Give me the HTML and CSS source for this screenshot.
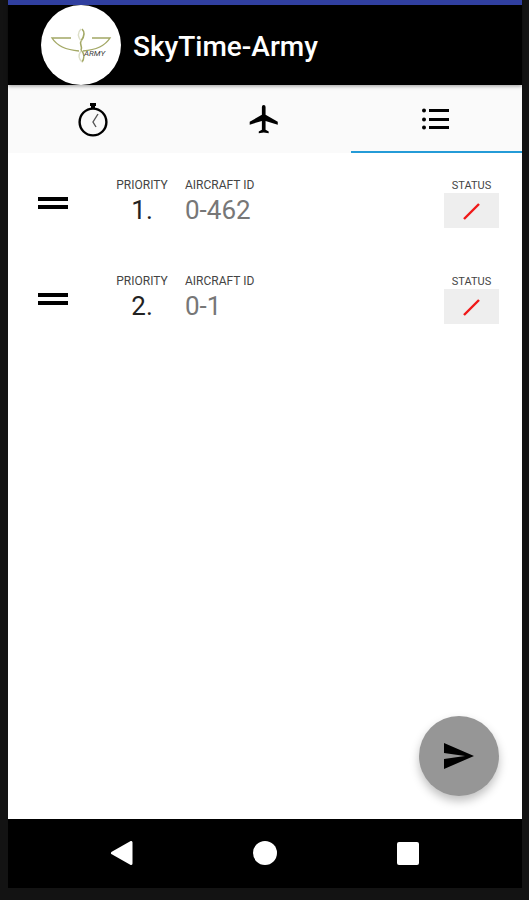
FILE: index.html
```html
<!DOCTYPE html>
<html lang="en">
<head>
    <meta charset="utf-8">
    <meta name="viewport" content="width=device-width, initial-scale=1">
    <title>SkyTime-Army</title>
    <link rel="stylesheet" href="styles.css">
</head>
<body>
<div class="screen">

    <!-- Header -->
    <header class="app-bar">
        <div class="logo">
            <svg viewBox="0 0 80 80" aria-hidden="true">
                <g fill="none" stroke="#a3a865" stroke-width="1.4">
                    <path d="M30 33H11C16 41 26 45 38 46M51 33H69C64 41 54 45 42 46"/>
                    <path d="M41 24C45 28 43 32 40 36C38 40 42 41 40 45M40 45C44 49 43 54 41 57" stroke-width="1.6"/>
                    <path d="M40 24C36 28 37 32 40 36M40 46C37 50 38 54 41 57" stroke="#dddfc8"/>
                </g>
                <text class="logo-text" x="43" y="51">ARMY</text>
            </svg>
        </div>
        <h1 class="title">SkyTime-Army</h1>
    </header>

    <!-- Tabs -->
    <nav class="tabs">
        <a href="#" class="tab" aria-label="Timer">
            <svg width="32" height="36" viewBox="0 0 32 36">
                <circle cx="15" cy="21" r="13.4" fill="none" stroke="#000" stroke-width="2.4"/>
                <path d="M12 2h6v3h-1v3h-4V5h-1z"/>
                <path d="M20 13L15 21L18 26" fill="none" stroke="#555" stroke-width="1.4"/>
            </svg>
        </a>
        <a href="#" class="tab" aria-label="Aircraft">
            <svg width="34" height="34" viewBox="0 0 24 24">
                <path d="M9.800 9V3.500a1.300 1.300 0 0 1 2.600 0V9L21 14v2l-8.600-2.600V19.500l2.200 1.300V22L11.100 21.500l-3.500.5v-1.200L9.800 19.500v-6.100L1.200 16v-2z"/>
            </svg>
        </a>
        <a href="#" class="tab active" aria-label="List">
            <svg width="28" height="24" viewBox="0 0 28 24">
                <path d="M7 2h20v3H7zM7 11h20v3H7zM7 19h20v3H7z"/>
                <circle cx="2" cy="3.500" r="2"/>
                <circle cx="2" cy="12.500" r="2"/>
                <circle cx="2" cy="20.500" r="2"/>
            </svg>
        </a>
    </nav>

    <!-- Aircraft list -->
    <main class="content">
        <ul class="list">
            <li class="row">
                <button type="button" class="handle" aria-label="Reorder"></button>
                <div class="field priority">
                    <span class="label">PRIORITY</span>
                    <span class="value">1.</span>
                </div>
                <div class="field aircraft">
                    <span class="label">AIRCRAFT ID</span>
                    <span class="value">0-462</span>
                </div>
                <div class="field status">
                    <label class="label" for="status1">STATUS</label>
                    <button type="button" class="status-btn" id="status1">
                        <svg width="18" height="18" viewBox="0 0 18 18"><path d="M1 17L16 2"/></svg>
                    </button>
                </div>
            </li>
            <li class="row">
                <button type="button" class="handle" aria-label="Reorder"></button>
                <div class="field priority">
                    <span class="label">PRIORITY</span>
                    <span class="value">2.</span>
                </div>
                <div class="field aircraft">
                    <span class="label">AIRCRAFT ID</span>
                    <span class="value">0-1</span>
                </div>
                <div class="field status">
                    <label class="label" for="status2">STATUS</label>
                    <button type="button" class="status-btn" id="status2">
                        <svg width="18" height="18" viewBox="0 0 18 18"><path d="M1 17L16 2"/></svg>
                    </button>
                </div>
            </li>
        </ul>
        <button type="button" class="fab" aria-label="Send">
            <svg width="32" height="28" viewBox="0 0 32 28">
                <path d="M1 1L31 14L1 27V17L22 14L1 11z"/>
            </svg>
        </button>
    </main>

    <!-- System navigation -->
    <footer class="nav-bar">
        <button type="button" class="nav-btn" aria-label="Back">
            <svg width="24" height="24" viewBox="0 0 24 24"><path d="M2.500 12L21 1.500V22.500z" stroke-width="3" stroke-linejoin="round"/></svg>
        </button>
        <button type="button" class="nav-btn" aria-label="Home">
            <svg width="24" height="24" viewBox="0 0 24 24"><circle cx="12" cy="12" r="12"/></svg>
        </button>
        <button type="button" class="nav-btn" aria-label="Recent apps">
            <svg width="24" height="24" viewBox="0 0 24 24"><rect x="1" y="1" width="22" height="23" rx="2"/></svg>
        </button>
    </footer>

</div>
</body>
</html>
```
FILE: styles.css
```css
* {
    box-sizing: border-box;
}

body {
    margin: 0;
    background-color: #131313;
    font-family: Roboto, "Liberation Sans", sans-serif;
    color: #222;
}

button {
    border: none;
    padding: 0;
    background: none;
    font-family: inherit;
    cursor: pointer;
}

/* Phone screen inside the dark frame */
.screen {
    display: flex;
    flex-direction: column;
    min-height: 100vh;
    border: solid #131313;
    border-width: 0 7px 12px 8px;
    background-color: #fff;
}

/* Header */
.app-bar {
    display: flex;
    align-items: center;
    gap: 12px;
    height: 85px;
    padding-left: 33px;
    border-top: 5px solid #303f9f;
    background-color: #000;
    box-shadow: 0 1px 4px rgba(0, 0, 0, 0.4);
    z-index: 1;
}

.logo {
    width: 80px;
    height: 80px;
    border-radius: 50%;
    background-color: #fff;
}

.logo svg {
    display: block;
}

.logo-text {
    font-size: 8px;
    font-style: italic;
    fill: #444;
}

.title {
    margin: 0;
    padding-top: 2px;
    font-size: 28px;
    font-weight: 500;
    color: #fff;
}

/* Tabs */
.tabs {
    display: flex;
    height: 68px;
    background-color: #fafafa;
}

.tab {
    display: flex;
    flex: 1;
    align-items: center;
    justify-content: center;
    border: solid transparent;
    border-width: 2px 0;
}

.tab.active {
    border-bottom-color: #249bd7;
}

/* Aircraft list */
.content {
    display: flex;
    flex: 1;
    flex-direction: column;
    justify-content: space-between;
}

.list {
    list-style: none;
    margin: 0;
    padding: 0;
}

.row {
    display: flex;
    align-items: center;
    padding: 25px 23px 21px 30px;
}

.handle {
    width: 30px;
    height: 12px;
    border: solid #000;
    border-width: 4px 0;
}

.field {
    display: flex;
    flex-direction: column;
}

.label {
    font-size: 12px;
    line-height: 15px;
    white-space: nowrap;
    color: #444;
}

.value {
    font-size: 26px;
    line-height: 35px;
}

.priority {
    align-items: center;
    width: 52px;
    margin-left: 48px;
}

.aircraft {
    flex: 1;
    margin-left: 17px;
}

.aircraft .value {
    color: #777;
}

.status {
    align-items: center;
}

.status .label {
    font-size: 11px;
}

.status-btn {
    display: flex;
    align-items: center;
    justify-content: center;
    width: 55px;
    height: 35px;
    background-color: #eee;
}

.status-btn path {
    fill: none;
    stroke: #f01818;
    stroke-width: 2.4;
}

/* Send button */
.fab {
    display: flex;
    align-items: center;
    justify-content: center;
    align-self: flex-end;
    width: 80px;
    height: 80px;
    margin: 0 23px 23px 0;
    border-radius: 50%;
    background-color: #969696;
    box-shadow: 0 5px 10px rgba(0, 0, 0, 0.25);
}

/* System navigation */
.nav-bar {
    display: flex;
    height: 69px;
    padding: 0 43px 2px;
    background-color: #000;
}

.nav-btn {
    display: flex;
    flex: 1;
    align-items: center;
    justify-content: center;
}

.nav-btn svg {
    fill: #fff;
    stroke: #fff;
    stroke-width: 0;
}
```
